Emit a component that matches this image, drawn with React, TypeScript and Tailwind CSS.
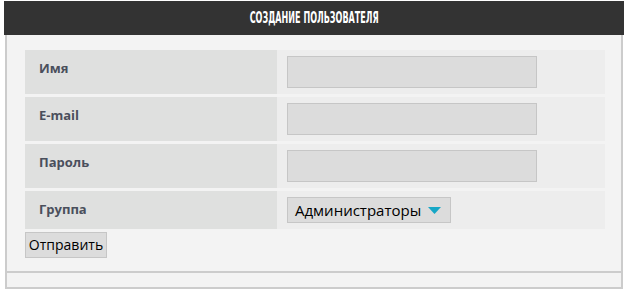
export default function App() {
  const rows = [
    { label: 'Имя', kind: 'input' },
    { label: 'E-mail', kind: 'input' },
    { label: 'Пароль', kind: 'input' },
    { label: 'Группа', kind: 'select' },
  ];

  return (
    <div className="w-[627px] h-[291px] bg-white font-['Open_Sans',sans-serif]">
      <div className="ml-[4px] w-[620px] pt-px">
        <div className="h-[34px] bg-[#333333] flex items-center justify-center">
          <span className="inline-block scale-x-[0.56] font-['DejaVu_Sans_Condensed',sans-serif] font-bold text-[16px] leading-none text-white whitespace-nowrap">
            СОЗДАНИЕ ПОЛЬЗОВАТЕЛЯ
          </span>
        </div>
        <div className="mx-px border-x-2 border-b-2 border-[#cccccc] bg-[#f3f3f3]">
          <div className="pt-[15px] pl-[18px] pr-[17px] pb-[13px] border-b-2 border-[#cccccc]">
            <div className="w-[580px] flex flex-col gap-[3px]">
              {rows.map((r) => (
                <div key={r.label} className="flex">
                  <div className="w-[252px] bg-[#dfe0df] pl-[14px] pt-[9px] text-[13px] leading-[18px] font-bold text-[#4a4f5c]">
                    {r.label}
                  </div>
                  <div className="flex-1 bg-[#ededed] pl-[10px] py-[6px]">
                    {r.kind === 'input' ? (
                      <div className="w-[250px] h-[32px] bg-[#dcdcdc] border border-[#c6c6c6]" />
                    ) : (
                      <div className="w-[164px] h-[26px] bg-[#dcdcdc] border border-[#c6c6c6] flex items-center pl-[7px] pr-[9px] justify-between">
                        <span className="text-[15px] text-black leading-none">Администраторы</span>
                        <svg width="13" height="7" viewBox="0 0 13 7">
                          <polygon points="0,0 13,0 6.5,7" fill="#17a7c6" />
                        </svg>
                      </div>
                    )}
                  </div>
                </div>
              ))}
              <div>
                <button className="h-[26px] w-[82px] bg-[#dcdcdc] border border-[#c6c6c6] text-[14px] text-black leading-none">
                  Отправить
                </button>
              </div>
            </div>
          </div>
          <div className="h-[14px]" />
        </div>
      </div>
    </div>
  );
}
